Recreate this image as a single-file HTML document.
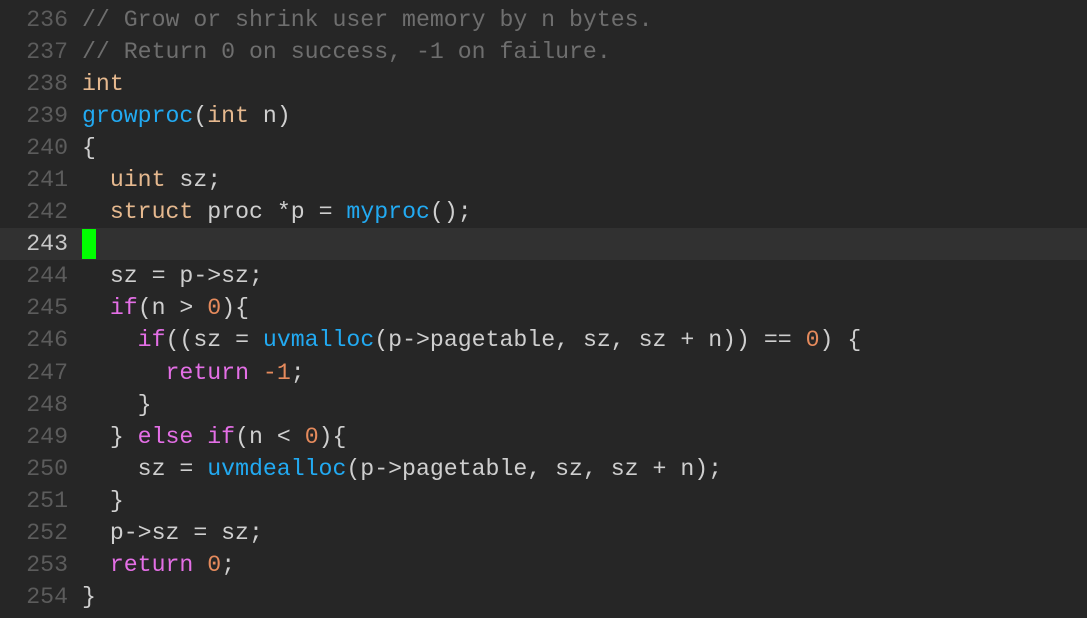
<!DOCTYPE html><html><head><style>
body{margin:0;background:#262626;width:1087px;height:618px;overflow:hidden;font-family:"Liberation Mono",monospace;font-size:23.2px;}
.l{position:relative;height:32.06px;line-height:33px;white-space:pre;color:#cfcfcf;}
.n{position:absolute;left:0;width:68px;text-align:right;color:#5c5c5c;}
.c{position:absolute;left:82px;}
.cur{background:#313131;}
.cur .n{color:#c8c8c8}
.k{color:#e6b98f}.f{color:#22aaf2}.m{color:#e46fe6}.d{color:#e58a5c}.g{color:#6e6e6e}
.cb{display:inline-block;width:14px;height:30px;background:#00ff00;vertical-align:middle;}
</style></head><body><div style="height:4px"></div>
<div class="l"><span class="n">236</span><span class="c g">// Grow or shrink user memory by n bytes.</span></div>
<div class="l"><span class="n">237</span><span class="c g">// Return 0 on success, -1 on failure.</span></div>
<div class="l"><span class="n">238</span><span class="c k">int</span></div>
<div class="l"><span class="n">239</span><span class="c"><span class="f">growproc</span>(<span class="k">int</span> n)</span></div>
<div class="l"><span class="n">240</span><span class="c">{</span></div>
<div class="l"><span class="n">241</span><span class="c">  <span class="k">uint</span> sz;</span></div>
<div class="l"><span class="n">242</span><span class="c">  <span class="k">struct</span> proc *p = <span class="f">myproc</span>();</span></div>
<div class="l cur"><span class="n">243</span><span class="c"><span class="cb"></span></span></div>
<div class="l"><span class="n">244</span><span class="c">  sz = p-&gt;sz;</span></div>
<div class="l"><span class="n">245</span><span class="c">  <span class="m">if</span>(n &gt; <span class="d">0</span>){</span></div>
<div class="l"><span class="n">246</span><span class="c">    <span class="m">if</span>((sz = <span class="f">uvmalloc</span>(p-&gt;pagetable, sz, sz + n)) == <span class="d">0</span>) {</span></div>
<div class="l"><span class="n">247</span><span class="c">      <span class="m">return</span> <span class="d">-1</span>;</span></div>
<div class="l"><span class="n">248</span><span class="c">    }</span></div>
<div class="l"><span class="n">249</span><span class="c">  } <span class="m">else</span> <span class="m">if</span>(n &lt; <span class="d">0</span>){</span></div>
<div class="l"><span class="n">250</span><span class="c">    sz = <span class="f">uvmdealloc</span>(p-&gt;pagetable, sz, sz + n);</span></div>
<div class="l"><span class="n">251</span><span class="c">  }</span></div>
<div class="l"><span class="n">252</span><span class="c">  p-&gt;sz = sz;</span></div>
<div class="l"><span class="n">253</span><span class="c">  <span class="m">return</span> <span class="d">0</span>;</span></div>
<div class="l"><span class="n">254</span><span class="c">}</span></div>
</body></html>
